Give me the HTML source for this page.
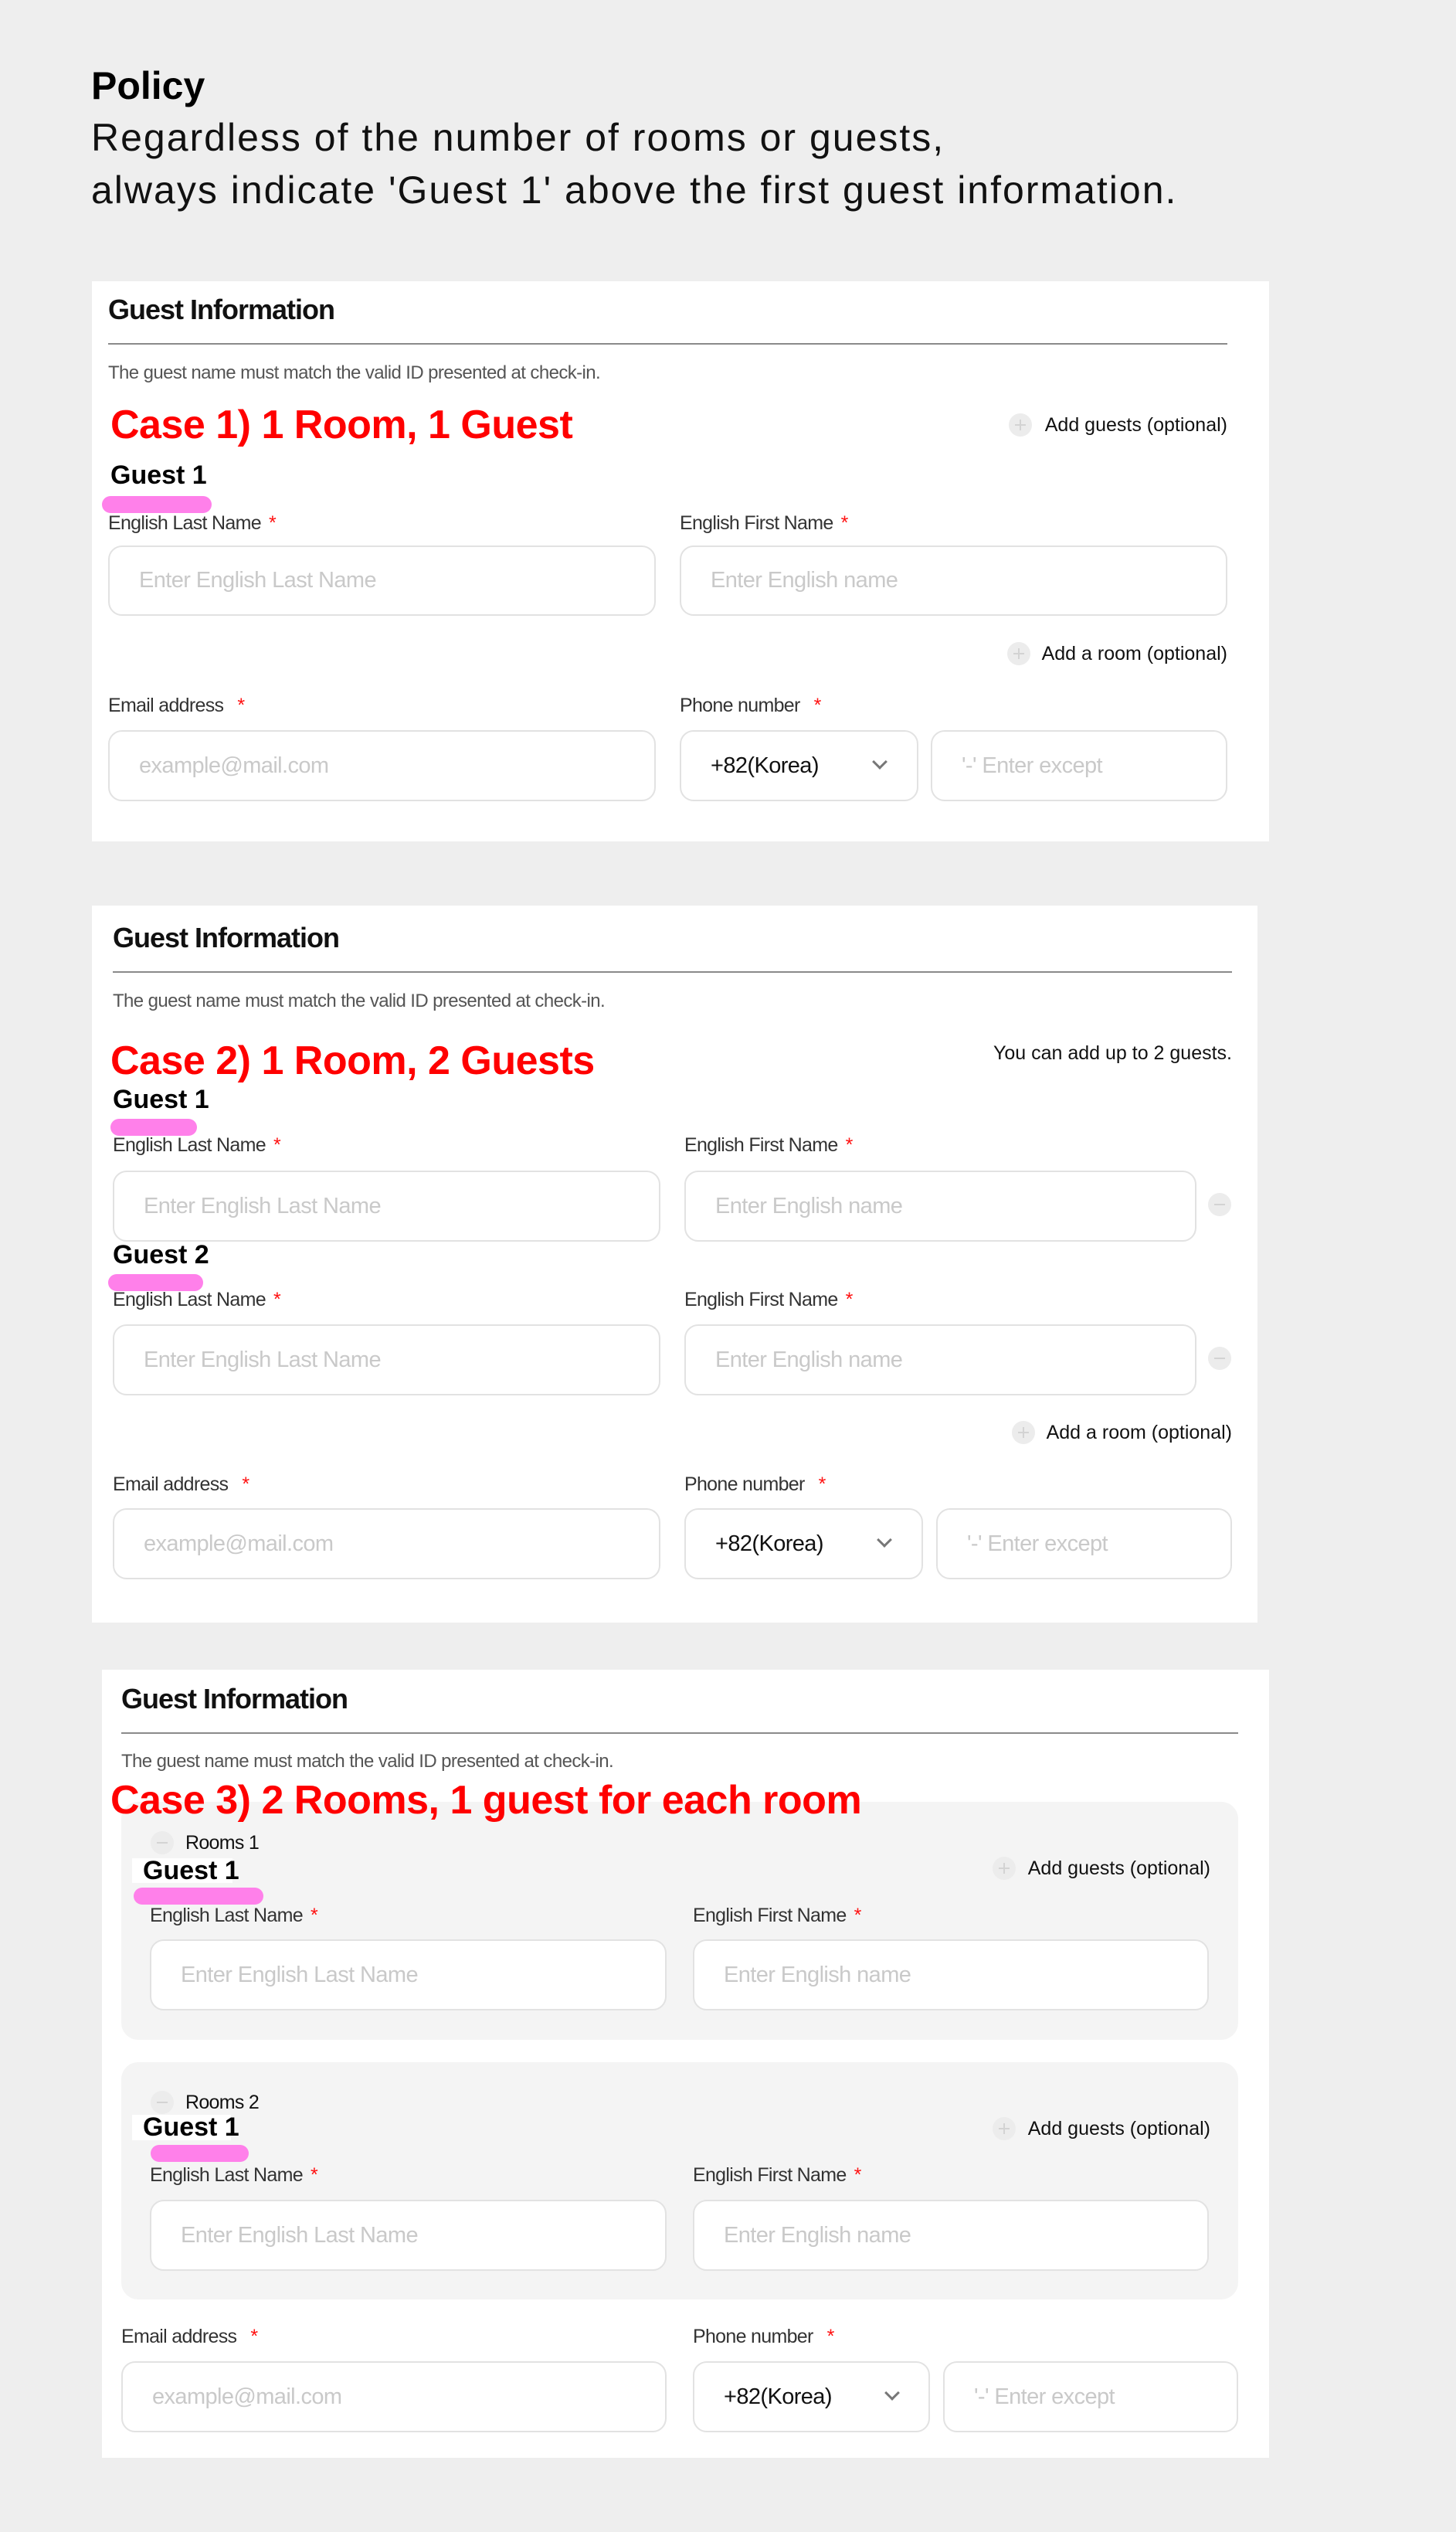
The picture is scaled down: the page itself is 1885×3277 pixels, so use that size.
<!DOCTYPE html>
<html><head><meta charset="utf-8"><style>
*{margin:0;padding:0;box-sizing:border-box}
body{width:1885px;height:3277px;background:#eeeeee;position:relative;font-family:"Liberation Sans",Arial,sans-serif;overflow:hidden}
.a{position:absolute;white-space:nowrap}
.panel{position:absolute;background:#fff}
.gi{font-size:36px;font-weight:bold;color:#111;letter-spacing:-1px;height:40px;line-height:40px}
.hr{position:absolute;height:2px;background:#8a8a8a}
.desc{font-size:24px;color:#555;letter-spacing:-0.6px;height:28px;line-height:28px}
.case{font-size:52px;font-weight:bold;color:#ff0000;letter-spacing:-0.5px;height:60px;line-height:60px}
.guest{font-size:34px;font-weight:bold;color:#000;height:38px;line-height:38px}
.pink{position:absolute;background:#ff80ea;border-radius:12px;height:22px}
.lbl{font-size:25px;color:#333;letter-spacing:-0.7px;height:30px;line-height:30px}
.lbl b{color:#ff1010;font-weight:normal;margin-left:10px}
.inp{position:absolute;border:2px solid #e2e2e2;border-radius:18px;background:#fff;font-size:29px;color:#c9c9c9;letter-spacing:-0.6px;display:flex;align-items:center;padding-left:38px}
.inp.sel{color:#111}
.opt{font-size:25px;color:#111;letter-spacing:0px;height:30px;line-height:30px;text-align:right}
.ic{position:absolute;width:30px;height:30px;border-radius:50%;background:#ececec}
.ic::before{content:"";position:absolute;left:8px;top:14px;width:14px;height:2px;background:#d3d3d3}
.ic.plus::after{content:"";position:absolute;left:14px;top:8px;width:2px;height:14px;background:#d3d3d3}
.room{position:absolute;background:#f4f4f4;border-radius:22px}
.chev{position:absolute;width:14px;height:14px;border-right:3px solid #777;border-bottom:3px solid #777;transform:rotate(45deg)}
</style></head><body>

<div class="a" style="left:118px;top:84px;font-size:50px;font-weight:bold;line-height:54px">Policy</div>
<div class="a" style="left:118px;top:150px;font-size:50px;letter-spacing:2px;line-height:56px;color:#111">Regardless of the number of rooms or guests,</div>
<div class="a" style="left:118px;top:218px;font-size:50px;letter-spacing:2px;line-height:56px;color:#111">always indicate 'Guest 1' above the first guest information.</div>

<!-- Panel 1 -->
<div class="panel" style="left:119px;top:364px;width:1524px;height:725px"></div>
<div class="a gi" style="left:140px;top:381px">Guest Information</div>
<div class="hr" style="left:140px;top:444px;width:1449px"></div>
<div class="a desc" style="left:140px;top:469px">The guest name must match the valid ID presented at check-in.</div>
<div class="a case" style="left:143px;top:520px">Case 1) 1 Room, 1 Guest</div>
<div class="ic plus" style="left:1306px;top:535px"></div>
<div class="a opt" style="right:296px;top:535px">Add guests (optional)</div>
<div class="a guest" style="left:143px;top:596px">Guest 1</div>
<div class="pink" style="left:132px;top:642px;width:142px"></div>
<div class="a lbl" style="left:140px;top:662px">English Last Name<b>*</b></div>
<div class="a lbl" style="left:880px;top:662px">English First Name<b>*</b></div>
<div class="inp" style="left:140px;top:706px;width:709px;height:91px">Enter English Last Name</div>
<div class="inp" style="left:880px;top:706px;width:709px;height:91px">Enter English name</div>
<div class="ic plus" style="left:1304px;top:831px"></div>
<div class="a opt" style="right:296px;top:831px">Add a room (optional)</div>
<div class="a lbl" style="left:140px;top:898px">Email address<b style="margin-left:18px">*</b></div>
<div class="a lbl" style="left:880px;top:898px">Phone number<b style="margin-left:18px">*</b></div>
<div class="inp" style="left:140px;top:945px;width:709px;height:92px">example@mail.com</div>
<div class="inp sel" style="left:880px;top:945px;width:309px;height:92px">+82(Korea)</div>
<div class="chev" style="left:1132px;top:979px"></div>
<div class="inp" style="left:1205px;top:945px;width:384px;height:92px">'-' Enter except</div>

<!-- Panel 2 -->
<div class="panel" style="left:119px;top:1172px;width:1509px;height:928px"></div>
<div class="a gi" style="left:146px;top:1194px">Guest Information</div>
<div class="hr" style="left:146px;top:1257px;width:1449px"></div>
<div class="a desc" style="left:146px;top:1282px">The guest name must match the valid ID presented at check-in.</div>
<div class="a case" style="left:143px;top:1343px">Case 2) 1 Room, 2 Guests</div>
<div class="a opt" style="right:290px;top:1348px">You can add up to 2 guests.</div>
<div class="a guest" style="left:146px;top:1404px">Guest 1</div>
<div class="pink" style="left:143px;top:1448px;width:112px"></div>
<div class="a lbl" style="left:146px;top:1467px">English Last Name<b>*</b></div>
<div class="a lbl" style="left:886px;top:1467px">English First Name<b>*</b></div>
<div class="inp" style="left:146px;top:1515px;width:709px;height:92px">Enter English Last Name</div>
<div class="inp" style="left:886px;top:1515px;width:663px;height:92px">Enter English name</div>
<div class="ic" style="left:1564px;top:1544px"></div>
<div class="a guest" style="left:146px;top:1605px">Guest 2</div>
<div class="pink" style="left:140px;top:1649px;width:123px"></div>
<div class="a lbl" style="left:146px;top:1667px">English Last Name<b>*</b></div>
<div class="a lbl" style="left:886px;top:1667px">English First Name<b>*</b></div>
<div class="inp" style="left:146px;top:1714px;width:709px;height:92px">Enter English Last Name</div>
<div class="inp" style="left:886px;top:1714px;width:663px;height:92px">Enter English name</div>
<div class="ic" style="left:1564px;top:1743px"></div>
<div class="ic plus" style="left:1310px;top:1839px"></div>
<div class="a opt" style="right:290px;top:1839px">Add a room (optional)</div>
<div class="a lbl" style="left:146px;top:1906px">Email address<b style="margin-left:18px">*</b></div>
<div class="a lbl" style="left:886px;top:1906px">Phone number<b style="margin-left:18px">*</b></div>
<div class="inp" style="left:146px;top:1952px;width:709px;height:92px">example@mail.com</div>
<div class="inp sel" style="left:886px;top:1952px;width:309px;height:92px">+82(Korea)</div>
<div class="chev" style="left:1138px;top:1986px"></div>
<div class="inp" style="left:1212px;top:1952px;width:383px;height:92px">'-' Enter except</div>

<!-- Panel 3 -->
<div class="panel" style="left:132px;top:2161px;width:1511px;height:1020px"></div>
<div class="a gi" style="left:157px;top:2179px">Guest Information</div>
<div class="hr" style="left:157px;top:2242px;width:1446px"></div>
<div class="a desc" style="left:157px;top:2266px">The guest name must match the valid ID presented at check-in.</div>

<div class="room" style="left:157px;top:2332px;width:1446px;height:308px"></div>
<div class="a case" style="left:143px;top:2300px">Case 3) 2 Rooms, 1 guest for each room</div>
<div class="ic" style="left:195px;top:2370px"></div>
<div class="a lbl" style="left:240px;top:2370px;color:#111">Rooms 1</div>
<div class="a guest" style="left:171px;top:2405px;width:130px;height:32px;line-height:32px;background:#fff;padding-left:14px">Guest 1</div>
<div class="pink" style="left:173px;top:2443px;width:168px"></div>
<div class="ic plus" style="left:1285px;top:2403px"></div>
<div class="a opt" style="right:318px;top:2403px">Add guests (optional)</div>
<div class="a lbl" style="left:194px;top:2464px">English Last Name<b>*</b></div>
<div class="a lbl" style="left:897px;top:2464px">English First Name<b>*</b></div>
<div class="inp" style="left:194px;top:2510px;width:669px;height:92px">Enter English Last Name</div>
<div class="inp" style="left:897px;top:2510px;width:668px;height:92px">Enter English name</div>

<div class="room" style="left:157px;top:2669px;width:1446px;height:307px"></div>
<div class="ic" style="left:195px;top:2706px"></div>
<div class="a lbl" style="left:240px;top:2706px;color:#111">Rooms 2</div>
<div class="a guest" style="left:171px;top:2737px;width:128px;height:33px;line-height:33px;background:#fff;padding-left:14px">Guest 1</div>
<div class="pink" style="left:195px;top:2776px;width:127px"></div>
<div class="ic plus" style="left:1285px;top:2740px"></div>
<div class="a opt" style="right:318px;top:2740px">Add guests (optional)</div>
<div class="a lbl" style="left:194px;top:2800px">English Last Name<b>*</b></div>
<div class="a lbl" style="left:897px;top:2800px">English First Name<b>*</b></div>
<div class="inp" style="left:194px;top:2847px;width:669px;height:92px">Enter English Last Name</div>
<div class="inp" style="left:897px;top:2847px;width:668px;height:92px">Enter English name</div>

<div class="a lbl" style="left:157px;top:3009px">Email address<b style="margin-left:18px">*</b></div>
<div class="a lbl" style="left:897px;top:3009px">Phone number<b style="margin-left:18px">*</b></div>
<div class="inp" style="left:157px;top:3056px;width:706px;height:92px">example@mail.com</div>
<div class="inp sel" style="left:897px;top:3056px;width:307px;height:92px">+82(Korea)</div>
<div class="chev" style="left:1148px;top:3090px"></div>
<div class="inp" style="left:1221px;top:3056px;width:382px;height:92px">'-' Enter except</div>

</body></html>
